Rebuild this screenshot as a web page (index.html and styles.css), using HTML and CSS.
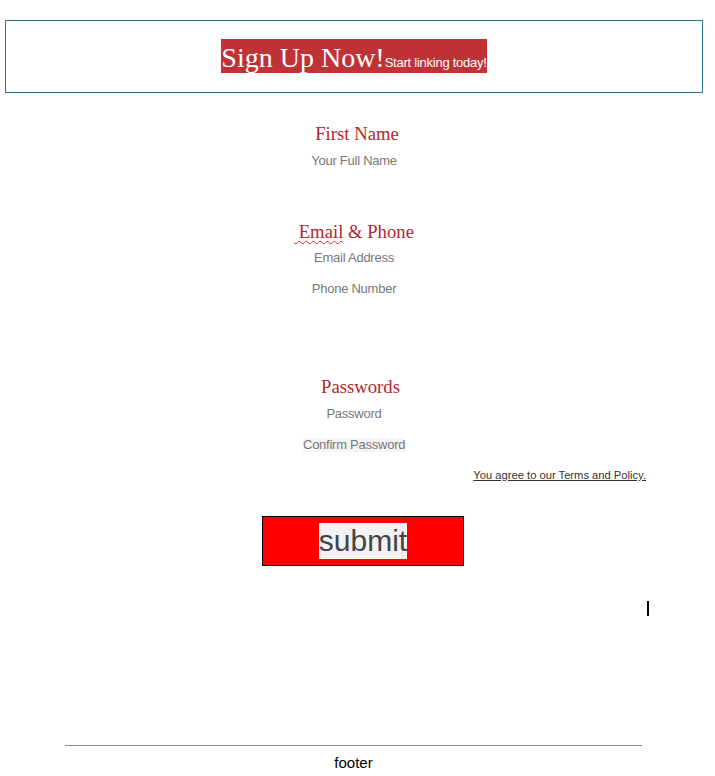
FILE: index.html
```html
<!DOCTYPE html>
<html lang="en">
<head>
<meta charset="utf-8">
<title>Sign Up</title>
<link rel="stylesheet" href="styles.css">
</head>
<body>
<header class="banner">
  <h1 class="banner-title"><span class="title-main">Sign Up Now!</span><span class="title-sub">Start linking today!</span></h1>
</header>

<form class="signup">
  <section class="group group-name">
    <h2 class="group-label">First Name</h2>
    <input class="field" type="text" placeholder="Your Full Name">
  </section>

  <section class="group group-contact">
    <h2 class="group-label label-email"><span class="misspelled">&nbsp;Email</span> &amp; Phone</h2>
    <input class="field" type="email" placeholder="Email Address">
    <input class="field" type="tel" placeholder="Phone Number">
  </section>

  <section class="group group-pass">
    <h2 class="group-label label-pass">Passwords</h2>
    <input class="field" type="password" placeholder="Password">
    <input class="field field-confirm" type="password" placeholder="Confirm Password">
  </section>

  <p class="terms"><a href="#" class="terms-link">You agree to our Terms and Policy.</a></p>

  <div class="actions">
    <button type="button" class="submit"><span class="submit-text">submit</span></button>
  </div>

  <div class="caret-row"><span class="caret"></span></div>
</form>

<footer class="page-footer">
  <hr class="footer-rule">
  <p class="footer-text">footer</p>
</footer>
</body>
</html>
```

FILE: styles.css
```css
* {
  box-sizing: border-box;
}

html, body {
  margin: 0;
  padding: 0;
  background: #ffffff;
}

body {
  font-family: "Liberation Serif", "Times New Roman", serif;
}

.banner {
  margin: 20px 12px 0 5px;
  border: 1px solid #2f7498;
  padding: 18px 0 19px;
  text-align: center;
}

.banner-title {
  display: inline-block;
  margin: 0;
  background: #bf3236;
  color: #ffffff;
  font-weight: normal;
  height: 34px;
  line-height: 34px;
  white-space: nowrap;
}

.title-main {
  font-family: "Liberation Serif", "Times New Roman", serif;
  font-size: 28px;
}

.title-sub {
  font-family: "Liberation Sans", Arial, sans-serif;
  font-size: 13px;
  letter-spacing: -0.25px;
}

.signup {
  display: flex;
  flex-direction: column;
  padding: 30px 7px 0 0;
}

.group {
  display: flex;
  flex-direction: column;
  align-items: center;
}

.group-contact {
  margin-top: 52px;
}

.group-pass {
  margin-top: 79px;
}

.group-label {
  margin: 0 0 8px;
  padding-left: 6px;
  font-family: "Liberation Serif", "Times New Roman", serif;
  font-weight: normal;
  font-size: 18.7px;
  line-height: 22px;
  color: #b3272d;
  white-space: nowrap;
}

.label-email {
  padding-left: 0;
  margin-bottom: 7px;
}

.label-pass {
  padding-left: 13px;
}

.misspelled {
  text-decoration: underline wavy #e0242a;
  text-decoration-thickness: 1px;
  text-decoration-skip-ink: none;
  text-underline-offset: 2px;
}

.field {
  display: block;
  width: 200px;
  height: 16px;
  padding: 0;
  border: none;
  outline: none;
  background: transparent;
  font-family: "Liberation Sans", Arial, sans-serif;
  font-size: 13px;
  letter-spacing: -0.25px;
  line-height: 16px;
  text-align: center;
  color: #333;
}

.field + .field {
  margin-top: 15px;
}

.field::placeholder {
  color: #777777;
  opacity: 1;
}

.field-confirm {
  width: 102px;
  height: 14px;
  margin-top: 16px !important;
  margin-bottom: 1px;
  line-height: 14px;
  background: #f4f4f4;
}

.terms {
  margin: 16px 0 0;
  padding-right: 62px;
  text-align: right;
  font-family: "Liberation Sans", Arial, sans-serif;
  font-size: 11.2px;
  line-height: 13px;
}

.terms-link {
  color: #333333;
  text-decoration: underline;
}

.actions {
  display: flex;
  justify-content: center;
  margin-top: 34px;
  padding-left: 18px;
}

.submit {
  display: flex;
  align-items: center;
  justify-content: center;
  width: 202px;
  height: 50px;
  padding: 0;
  border: 1px solid #000000;
  background: #ff0000;
  cursor: pointer;
}

.submit-text {
  display: inline-block;
  height: 36px;
  line-height: 36px;
  background: #f2f2f2;
  color: #444444;
  font-family: "Liberation Sans", Arial, sans-serif;
  font-size: 30px;
}

.caret-row {
  display: flex;
  justify-content: flex-end;
  margin-top: 35px;
  padding-right: 59px;
}

.caret {
  display: block;
  width: 2px;
  height: 15px;
  background: #000000;
}

.page-footer {
  margin: 129px 73px 0 65px;
}

.footer-rule {
  margin: 0;
  border: none;
  border-top: 1px solid #8a8a8a;
  height: 0;
}

.footer-text {
  margin: 8px 0 0;
  text-align: center;
  font-family: "Liberation Sans", Arial, sans-serif;
  font-size: 15px;
  line-height: 17px;
  color: #000000;
}
```
